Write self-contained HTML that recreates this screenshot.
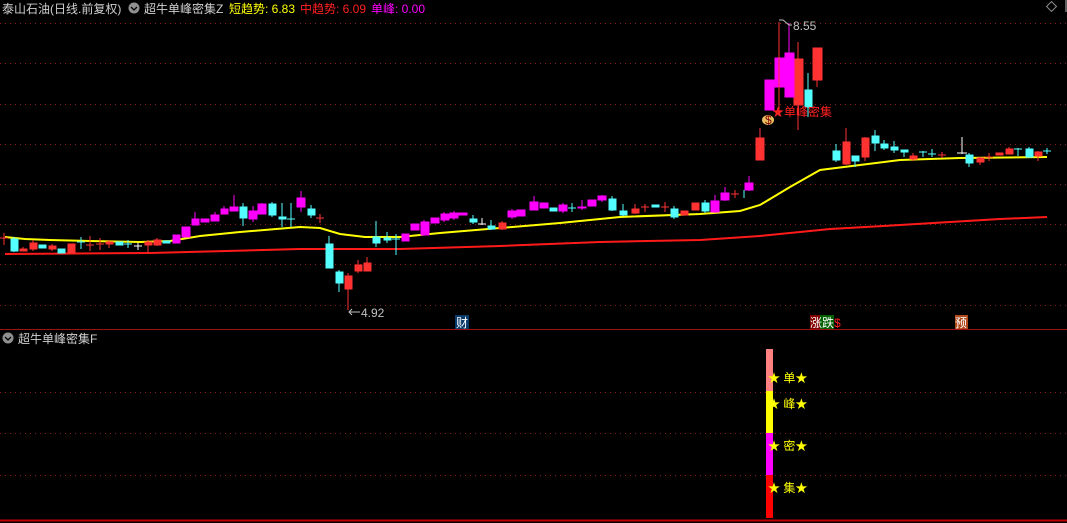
<!DOCTYPE html>
<html><head><meta charset="utf-8"><style>
html,body{margin:0;padding:0;background:#000;width:1067px;height:523px;overflow:hidden}
svg{display:block}
text{font-family:"Liberation Sans","Noto Sans CJK SC",sans-serif;font-size:12px}
</style></head><body>
<svg width="1067" height="523" viewBox="0 0 1067 523" xmlns="http://www.w3.org/2000/svg">
<g stroke="#8b1a1a" stroke-dasharray="1,4" stroke-width="1">
<line x1="0" y1="23.5" x2="1067" y2="23.5"/><line x1="0" y1="63.5" x2="1067" y2="63.5"/><line x1="0" y1="104.5" x2="1067" y2="104.5"/><line x1="0" y1="144.5" x2="1067" y2="144.5"/><line x1="0" y1="184.5" x2="1067" y2="184.5"/><line x1="0" y1="224.5" x2="1067" y2="224.5"/><line x1="0" y1="264.5" x2="1067" y2="264.5"/><line x1="0" y1="305.5" x2="1067" y2="305.5"/>
<line x1="0" y1="392.5" x2="1067" y2="392.5"/><line x1="0" y1="433.5" x2="1067" y2="433.5"/><line x1="0" y1="475.5" x2="1067" y2="475.5"/>
</g>
<line x1="0" y1="329.5" x2="1067" y2="329.5" stroke="#a01010"/>
<line x1="0" y1="520.5" x2="1067" y2="520.5" stroke="#c00000" stroke-width="2"/>

<polyline fill="none" stroke="#ff1a1a" stroke-width="2" points="5,254 150,253 300,249 400,249 500,246 600,242 700,240 760,236 800,232 830,229 900,225 1000,219 1047,217"/>
<polyline fill="none" stroke="#ffff00" stroke-width="2" points="5,237 25,239 50,240 90,241 140,242 170,241 200,236 240,232 300,227 320,228 340,234 365,237 400,237 440,233 500,228 560,223 620,217 700,214 740,211 760,205 790,187 820,170 860,165 900,160 960,158 1047,157"/>

<g stroke-width="1">
<g fill="#54ffff" stroke="#54ffff">
<line x1="14" y1="237" x2="14" y2="252"/><rect x="11" y="239" width="7" height="12"/>
<rect x="39" y="245" width="7" height="3"/><rect x="58" y="249" width="7" height="4"/>
<line x1="81" y1="237" x2="81" y2="249"/><line x1="77" y1="242" x2="85" y2="242"/>
<rect x="116" y="242" width="7" height="3"/><line x1="128" y1="240" x2="128" y2="248"/><line x1="124" y1="244" x2="132" y2="244"/>
<rect x="163" y="241" width="7" height="2"/><line x1="243" y1="203" x2="243" y2="226"/><rect x="240" y="207" width="7" height="11"/>
<line x1="272" y1="202" x2="272" y2="217"/><rect x="269" y="204" width="7" height="11"/>
<line x1="282" y1="203" x2="282" y2="227"/><rect x="279" y="217" width="7" height="2"/>
<line x1="291" y1="203" x2="291" y2="227"/><line x1="287" y1="219" x2="295" y2="219"/>
<line x1="311" y1="205" x2="311" y2="218"/><rect x="308" y="209" width="7" height="6"/>
<line x1="329" y1="236" x2="329" y2="268"/><rect x="326" y="244" width="7" height="24"/>
<line x1="339" y1="270" x2="339" y2="292"/><rect x="336" y="272" width="7" height="11"/>
<line x1="376" y1="221" x2="376" y2="247"/><rect x="373" y="237" width="7" height="6"/>
<line x1="387" y1="232" x2="387" y2="243"/><rect x="384" y="238" width="7" height="2"/>
<line x1="396" y1="234" x2="396" y2="255"/><line x1="392" y1="239" x2="400" y2="239"/>
<line x1="473" y1="215" x2="473" y2="224"/><rect x="470" y="219" width="7" height="3"/>
<line x1="491" y1="220" x2="491" y2="230"/><rect x="488" y="226" width="7" height="3"/>
<rect x="550" y="208" width="7" height="3"/><line x1="572" y1="203" x2="572" y2="212"/><line x1="568" y1="208" x2="576" y2="208"/>
<line x1="612" y1="196" x2="612" y2="211"/><rect x="609" y="199" width="7" height="11"/>
<line x1="623" y1="204" x2="623" y2="216"/><rect x="620" y="211" width="7" height="4"/>
<rect x="652" y="205" width="7" height="2"/><line x1="674" y1="206" x2="674" y2="219"/><rect x="671" y="209" width="7" height="8"/>
<line x1="705" y1="200" x2="705" y2="213"/><rect x="702" y="203" width="7" height="8"/>
<line x1="744" y1="190" x2="744" y2="198"/>
<line x1="808" y1="73" x2="808" y2="117"/><rect x="805" y="90" width="7" height="17"/>
<line x1="836" y1="144" x2="836" y2="162"/><rect x="833" y="151" width="7" height="9"/>
<line x1="855" y1="156" x2="855" y2="167"/><rect x="852" y="156" width="7" height="5"/>
<line x1="875" y1="130" x2="875" y2="151"/><rect x="872" y="136" width="7" height="7"/>
<line x1="884" y1="140" x2="884" y2="150"/><rect x="881" y="144" width="7" height="4"/>
<line x1="894" y1="141" x2="894" y2="153"/><rect x="891" y="147" width="7" height="3"/>
<line x1="904" y1="150" x2="904" y2="157"/><rect x="901" y="150" width="7" height="2"/>
<line x1="923" y1="151" x2="923" y2="157"/><line x1="919" y1="152" x2="927" y2="152"/>
<line x1="932" y1="149" x2="932" y2="157"/><line x1="928" y1="154" x2="936" y2="154"/>
<line x1="969" y1="153" x2="969" y2="167"/><rect x="966" y="155" width="7" height="8"/>
<line x1="1018" y1="148" x2="1018" y2="156"/><line x1="1014" y1="149" x2="1022" y2="149"/>
<line x1="1029" y1="147" x2="1029" y2="158"/><rect x="1026" y="149" width="7" height="8"/>
<line x1="1047" y1="148" x2="1047" y2="154"/><line x1="1043" y1="151" x2="1051" y2="151"/>
</g>
<g fill="#ff3232" stroke="#ff3232">
<line x1="4" y1="233" x2="4" y2="245"/><line x1="0" y1="238" x2="8" y2="238"/>
<line x1="23" y1="247" x2="23" y2="251"/><rect x="20" y="249" width="7" height="2"/>
<line x1="33" y1="240" x2="33" y2="251"/><rect x="30" y="243" width="7" height="6"/>
<line x1="52" y1="244" x2="52" y2="251"/><rect x="49" y="246" width="7" height="3"/>
<rect x="68" y="244" width="7" height="9"/>
<line x1="90" y1="236" x2="90" y2="251"/><line x1="86" y1="245" x2="94" y2="245"/>
<line x1="100" y1="238" x2="100" y2="250"/><line x1="96" y1="244" x2="104" y2="244"/>
<line x1="109" y1="240" x2="109" y2="248"/><rect x="106" y="242" width="7" height="2"/>
<line x1="148" y1="240" x2="148" y2="253"/><rect x="145" y="242" width="7" height="3"/>
<line x1="157" y1="238" x2="157" y2="246"/><rect x="154" y="240" width="7" height="5"/>
<line x1="320" y1="214" x2="320" y2="223"/><line x1="316" y1="218" x2="324" y2="218"/>
<line x1="348" y1="273" x2="348" y2="310"/><rect x="345" y="276" width="7" height="13"/>
<line x1="358" y1="260" x2="358" y2="273"/><rect x="355" y="265" width="7" height="6"/>
<line x1="367" y1="257" x2="367" y2="271"/><rect x="364" y="263" width="7" height="8"/>
<line x1="502" y1="221" x2="502" y2="230"/><rect x="499" y="223" width="7" height="6"/>
<line x1="635" y1="204" x2="635" y2="214"/><rect x="632" y="209" width="7" height="4"/>
<line x1="645" y1="204" x2="645" y2="212"/><line x1="641" y1="207" x2="649" y2="207"/>
<line x1="665" y1="202" x2="665" y2="212"/><line x1="661" y1="207" x2="669" y2="207"/>
<rect x="681" y="211" width="7" height="4"/><rect x="692" y="203" width="7" height="7"/>
<line x1="735" y1="190" x2="735" y2="198"/><line x1="731" y1="194" x2="739" y2="194"/>
<line x1="760" y1="128" x2="760" y2="160"/><rect x="756" y="138" width="8" height="22"/>
<line x1="798" y1="42" x2="798" y2="130"/><rect x="794" y="59" width="9" height="46"/>
<line x1="817" y1="48" x2="817" y2="87"/><rect x="813" y="48" width="9" height="32"/>
<line x1="846" y1="128" x2="846" y2="165"/><rect x="843" y="142" width="7" height="22"/>
<line x1="865" y1="137" x2="865" y2="161"/><rect x="862" y="138" width="7" height="19"/>
<line x1="913" y1="153" x2="913" y2="161"/><rect x="910" y="156" width="7" height="3"/>
<line x1="942" y1="152" x2="942" y2="158"/><line x1="938" y1="155" x2="946" y2="155"/>
<line x1="980" y1="157" x2="980" y2="165"/><rect x="977" y="158" width="7" height="4"/>
<line x1="989" y1="153" x2="989" y2="161"/><line x1="985" y1="157" x2="993" y2="157"/>
<rect x="996" y="153" width="7" height="2"/><line x1="1009" y1="147" x2="1009" y2="154"/><rect x="1006" y="149" width="7" height="5"/>
<line x1="1038" y1="151" x2="1038" y2="161"/><rect x="1035" y="152" width="7" height="4"/>
</g>
<g fill="#ff00ff" stroke="#ff00ff">
<rect x="173" y="235" width="7" height="8"/><rect x="182" y="227" width="8" height="10"/>
<line x1="195" y1="212" x2="195" y2="225"/><rect x="192" y="219" width="7" height="6"/>
<rect x="201" y="219" width="8" height="3"/><line x1="215" y1="212" x2="215" y2="221"/><rect x="211" y="215" width="8" height="6"/>
<line x1="224" y1="206" x2="224" y2="214"/><rect x="221" y="209" width="7" height="5"/>
<line x1="234" y1="195" x2="234" y2="211"/><rect x="230" y="207" width="8" height="4"/>
<line x1="253" y1="206" x2="253" y2="222"/><rect x="249" y="211" width="8" height="8"/>
<line x1="262" y1="203" x2="262" y2="214"/><rect x="258" y="204" width="8" height="10"/>
<line x1="301" y1="191" x2="301" y2="212"/><rect x="297" y="198" width="8" height="9"/>
<rect x="402" y="234" width="7" height="7"/><rect x="411" y="224" width="8" height="6"/>
<line x1="424" y1="220" x2="424" y2="235"/><rect x="421" y="222" width="8" height="13"/>
<rect x="431" y="218" width="8" height="5"/><line x1="444" y1="212" x2="444" y2="222"/><rect x="441" y="214" width="8" height="6"/>
<line x1="454" y1="211" x2="454" y2="220"/><rect x="450" y="213" width="8" height="5"/>
<rect x="459" y="213" width="8" height="2"/>
<line x1="512" y1="209" x2="512" y2="219"/><rect x="508" y="211" width="8" height="6"/>
<rect x="517" y="210" width="8" height="6"/><line x1="534" y1="196" x2="534" y2="210"/><rect x="530" y="202" width="8" height="8"/>
<rect x="540" y="203" width="8" height="5"/><line x1="563" y1="203" x2="563" y2="213"/><rect x="559" y="205" width="8" height="6"/>
<line x1="582" y1="200" x2="582" y2="210"/><rect x="578" y="207" width="8" height="1"/>
<rect x="588" y="200" width="8" height="6"/><line x1="602" y1="195" x2="602" y2="202"/><rect x="598" y="196" width="8" height="4"/>
<line x1="715" y1="195" x2="715" y2="213"/><rect x="711" y="201" width="8" height="11"/>
<line x1="725" y1="187" x2="725" y2="201"/><rect x="721" y="193" width="8" height="7"/>
<line x1="749" y1="176" x2="749" y2="191"/><rect x="745" y="183" width="8" height="7"/>
<rect x="765" y="80" width="9" height="30"/>
<rect x="775" y="58" width="9" height="29"/>
<line x1="789" y1="23" x2="789" y2="97"/><rect x="785" y="53" width="9" height="44"/>
</g>
<g stroke="#ffffff">
<line x1="138" y1="243" x2="138" y2="250"/><line x1="134" y1="246" x2="142" y2="246"/>
<line x1="482" y1="218" x2="482" y2="225"/><line x1="478" y1="224" x2="486" y2="224"/>
<line x1="962" y1="137" x2="962" y2="154"/><line x1="957" y1="153" x2="967" y2="153"/>
</g>
<line x1="779" y1="22" x2="779" y2="116" stroke="#ff3232"/>
</g>

<polyline points="779,20 783,20 789,25 792,25" fill="none" stroke="#c0c0c0"/>
<text x="793" y="30" fill="#c0c0c0" font-size="13">8.55</text>
<polyline points="349,312 360,312" fill="none" stroke="#c0c0c0"/><polyline points="352,309 349,312 352,315" fill="none" stroke="#c0c0c0"/>
<text x="361" y="317" fill="#c0c0c0" font-size="13">4.92</text>
<text x="772" y="116" fill="#ff2020" font-size="13">★单峰密集</text>
<ellipse cx="768" cy="120" rx="6" ry="5" fill="#e8c060"/><text x="765" y="124" fill="#800000" font-size="9">$</text>
<rect x="455" y="315" width="14" height="14" fill="#0a3a6a"/><text x="456" y="327" fill="#fff" font-size="12">财</text>
<rect x="810" y="315" width="10" height="14" fill="#800000"/><rect x="820" y="315" width="14" height="14" fill="#006000"/>
<text x="810" y="327" fill="#fff" font-size="12">涨跌</text><text x="834" y="327" fill="#ff2020" font-size="8">$</text>
<rect x="955" y="315" width="13" height="14" fill="#b04a1a"/><text x="955" y="327" fill="#fff" font-size="12">预</text>

<text x="2" y="13" fill="#d0d0d0" font-size="13">泰山石油(日线.前复权)</text>
<circle cx="134" cy="8" r="5.5" fill="#909090"/><polyline points="131,7 134,10 137,7" fill="none" stroke="#000" stroke-width="1.3"/>
<text x="144" y="13" fill="#d0d0d0" font-size="13">超牛单峰密集Z</text>
<text x="229" y="13" fill="#ffff00" font-size="13">短趋势: 6.83</text>
<text x="300" y="13" fill="#ff2020" font-size="13">中趋势: 6.09</text>
<text x="371" y="13" fill="#ff00ff" font-size="13">单峰: 0.00</text>
<rect x="1048" y="3" width="7" height="7" fill="none" stroke="#909090" transform="rotate(45 1051.5 6.5)"/>
<rect x="1065" y="0" width="2" height="12" fill="#606060"/>

<circle cx="8" cy="338" r="5.5" fill="#909090"/><polyline points="5,337 8,340 11,337" fill="none" stroke="#000" stroke-width="1.3"/>
<text x="18" y="343" fill="#d0d0d0" font-size="13">超牛单峰密集F</text>

<rect x="766" y="349" width="7" height="42" fill="#ff8080"/>
<rect x="766" y="391" width="7" height="42" fill="#ffff00"/>
<rect x="766" y="433" width="7" height="42" fill="#ff00ff"/>
<rect x="766" y="475" width="7" height="43" fill="#ff0000"/>
<g fill="#ffff00" font-size="13">
<text x="768" y="382">★ 单★</text>
<text x="768" y="408">★ 峰★</text>
<text x="768" y="450">★ 密★</text>
<text x="768" y="492">★ 集★</text>
</g>
</svg>
</body></html>
